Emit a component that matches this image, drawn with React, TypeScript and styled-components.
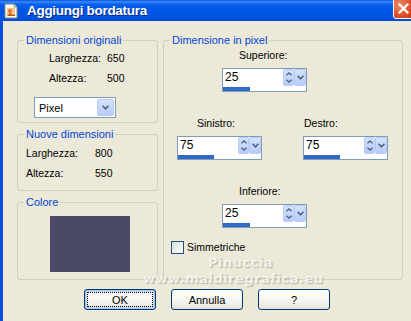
import styled, { createGlobalStyle } from "styled-components";

const GlobalStyle = createGlobalStyle`
  html, body { margin: 0; padding: 0; background: #ECE9D8; }
  body {
    font-family: "Liberation Sans", Arial, sans-serif;
    font-size: 10.5px;
    color: #000;
  }
`;

const Window = styled.div`
  position: relative;
  width: 411px;
  height: 321px;
  overflow: hidden;
  display: flex;
  flex-direction: column;
  background: #ECE9D8;
`;

const TitleBar = styled.div`
  flex: none;
  height: 21px;
  display: flex;
  align-items: center;
  gap: 8px;
  padding-left: 3px;
  overflow: hidden;
  background: linear-gradient(#0750E0 0, #3B8CF7 2px, #0A62EC 4px, #0056E6 9px, #0053E1 17px, #0049D6 21px);
`;

const Title = styled.span`
  flex: 1;
  color: #fff;
  font-weight: bold;
  font-size: 13.5px;
  letter-spacing: -0.3px;
  text-shadow: 1px 1px 0 #0A2A8A;
`;

const CloseBox = styled.div`
  flex: none;
  width: 21px;
  height: 21px;
  margin-top: -5px;
  margin-right: -3px;
  border: 1px solid #fff;
  border-radius: 3px;
  box-sizing: border-box;
  display: flex;
  align-items: center;
  justify-content: center;
  background: radial-gradient(circle at 30% 30%, #F08A6A, #D9441F 70%, #C23A15);
`;

const Body = styled.div`
  flex: 1;
  display: flex;
  flex-direction: column;
  border-left: 3px solid #0B4FE0;
`;

const MainRow = styled.div`
  display: flex;
  gap: 5px;
  padding: 13px 0 0 14px;
`;

const LeftColumn = styled.div`
  width: 141px;
  display: flex;
  flex-direction: column;
  gap: 5px;
`;

const Group = styled.fieldset<{ $pt: number; $pb: number; $pl?: number }>`
  margin: 0;
  min-width: 0;
  border: 1px solid #D0D0BF;
  border-radius: 3px;
  padding: ${(p) => p.$pt}px 0 ${(p) => p.$pb}px ${(p) => p.$pl ?? 0}px;
`;

const RightGroup = styled(Group)`
  width: 240px;
  box-sizing: border-box;
`;

const Legend = styled.legend`
  margin-left: 6px;
  padding: 0 2px;
  line-height: 13px;
  font-size: 11px;
  color: #0046D5;
`;

const InfoGrid = styled.div<{ $labelWidth: number; $indent: number }>`
  display: grid;
  grid-template-columns: ${(p) => p.$labelWidth}px auto;
  row-gap: 6px;
  line-height: 14px;
  padding-left: ${(p) => p.$indent}px;
`;

const ComboBox = styled.div`
  margin: 12px 0 0 16px;
  width: 82px;
  height: 21px;
  box-sizing: border-box;
  border: 1px solid #7F9DB9;
  background: #fff;
  display: flex;
  align-items: center;
  padding: 1px;
`;

const ComboText = styled.span`
  flex: 1;
  padding-left: 3px;
  font-size: 11px;
`;

const ArrowButton = styled.div<{ $w: number }>`
  width: ${(p) => p.$w}px;
  align-self: stretch;
  box-sizing: border-box;
  border: 1px solid #B9CCF5;
  border-radius: 2px;
  background: linear-gradient(#D6E2FE, #B7CBF7);
  display: flex;
  align-items: center;
  justify-content: center;
`;

const Swatch = styled.div`
  margin-left: 32px;
  width: 80px;
  height: 56px;
  background: #4A4A68;
`;

const FieldGrid = styled.div`
  display: grid;
  grid-template-columns: 85px 85px;
  column-gap: 41px;
  row-gap: 24px;
  padding-left: 13px;
`;

const Field = styled.div<{ $span?: boolean }>`
  display: flex;
  flex-direction: column;
  gap: 6px;
  grid-column: ${(p) => (p.$span ? "1 / span 2" : "auto")};
  margin-left: ${(p) => (p.$span ? 45 : 0)}px;
`;

const FieldLabel = styled.span<{ $indent: number }>`
  line-height: 14px;
  padding-left: ${(p) => p.$indent}px;
`;

const SpinBox = styled.div`
  width: 85px;
  height: 24px;
  box-sizing: border-box;
  border: 1px solid #7F9DB9;
  background: #fff;
  display: flex;
  flex-direction: column;
`;

const SpinTop = styled.div`
  height: 17px;
  display: flex;
`;

const SpinValue = styled.span`
  flex: 1;
  padding-left: 2px;
  font-size: 12px;
  line-height: 17px;
`;

const UpDown = styled.div`
  width: 11px;
  box-sizing: border-box;
  border: 1px solid #B9CCF5;
  border-radius: 2px;
  background: linear-gradient(#D6E2FE, #B7CBF7);
  display: flex;
  flex-direction: column;
  align-items: center;
  justify-content: space-around;
`;

const Bar = styled.div<{ $fill: number }>`
  margin-top: 1px;
  width: ${(p) => p.$fill}px;
  height: 4px;
  background: #316AC5;
`;

const CheckRow = styled.div`
  margin-top: 12px;
  padding-left: 7px;
  display: flex;
  align-items: center;
  gap: 3px;
  line-height: 14px;
`;

const CheckBox = styled.span`
  width: 13px;
  height: 13px;
  box-sizing: border-box;
  border: 1px solid #1C5180;
  background: linear-gradient(135deg, #DCDCD7, #fff);
`;

const ButtonRow = styled.div`
  display: flex;
  justify-content: center;
  gap: 15px;
  margin-top: 9px;
`;

const Button = styled.div<{ $default?: boolean }>`
  width: 72px;
  height: 21px;
  box-sizing: border-box;
  border: 1px solid #003C74;
  border-radius: 3px;
  background: linear-gradient(#FFFFFF, #F4F3EE 60%, #E3E0D5);
  display: flex;
  align-items: center;
  justify-content: center;
  font-size: 11px;
  box-shadow: ${(p) =>
    p.$default ? "inset 0 0 0 1px #A9C2F0, inset 0 0 0 2px #C9D8F6" : "none"};
  outline: ${(p) => (p.$default ? "1px dotted #000" : "none")};
  outline-offset: -4px;
`;

const Watermark = styled.div`
  position: absolute;
  left: 0;
  top: 255px;
  width: 411px;
  display: flex;
  flex-direction: column;
  font-family: "DejaVu Sans", sans-serif;
  font-weight: bold;
  font-size: 13px;
  line-height: 16px;
  letter-spacing: 0.5px;
  color: rgba(250, 249, 244, 0.85);
  text-shadow: 1px 1px 1px rgba(120, 116, 104, 0.45);
  pointer-events: none;
`;

const WaterLine = styled.span<{ $left: number }>`
  padding-left: ${(p) => p.$left}px;
`;

const Chevron = () => (
  <svg width={7} height={5} viewBox="0 0 7 5">
    <path d="M0.6 0.8 L3.5 3.8 L6.4 0.8" fill="none" stroke="#4D6185" strokeWidth="1.6" />
  </svg>
);

const ChevronUp = () => (
  <svg width={6} height={4} viewBox="0 0 7 4">
    <path d="M0.5 3.5 L3.5 0.8 L6.5 3.5" fill="none" stroke="#4D6185" strokeWidth="1.5" />
  </svg>
);

const ChevronDown = () => (
  <svg width={6} height={4} viewBox="0 0 7 4">
    <path d="M0.5 0.5 L3.5 3.2 L6.5 0.5" fill="none" stroke="#4D6185" strokeWidth="1.5" />
  </svg>
);

const AppIcon = () => (
  <svg width="16" height="16" viewBox="0 0 16 16">
    <path d="M2 1 H11 L14 4 V15 H2 Z" fill="#FDFDF8" stroke="#8A8A80" strokeWidth="1" />
    <path d="M11 1 V4 H14" fill="#E4E4DA" stroke="#8A8A80" strokeWidth="1" />
    <rect x="4" y="5" width="8" height="8" fill="#F3C792" />
    <circle cx="7" cy="8" r="2" fill="#E0742C" />
    <path d="M4 13 L7 10 L10 12 L12 11 V13 Z" fill="#C2561A" />
  </svg>
);

const CloseIcon = () => (
  <svg width="11" height="11" viewBox="0 0 11 11">
    <path d="M1.5 1.5 L9.5 9.5 M9.5 1.5 L1.5 9.5" stroke="#fff" strokeWidth="2.2" strokeLinecap="square" />
  </svg>
);

type SpinProps = { label: string; indent: number; value: string; fill: number; span?: boolean };

const SpinField = ({ label, indent, value, fill, span }: SpinProps) => (
  <Field $span={span}>
    <FieldLabel $indent={indent}>{label}</FieldLabel>
    <SpinBox>
      <SpinTop>
        <SpinValue>{value}</SpinValue>
        <UpDown>
          <ChevronUp />
          <ChevronDown />
        </UpDown>
        <ArrowButton $w={12}>
          <Chevron />
        </ArrowButton>
      </SpinTop>
      <Bar $fill={fill} />
    </SpinBox>
  </Field>
);

export default function App() {
  return (
    <>
      <GlobalStyle />
      <Window>
        <TitleBar>
          <AppIcon />
          <Title>Aggiungi bordatura</Title>
          <CloseBox>
            <CloseIcon />
          </CloseBox>
        </TitleBar>
        <Body>
          <MainRow>
            <LeftColumn>
              <Group $pt={4} $pb={4}>
                <Legend>Dimensioni originali</Legend>
                <InfoGrid $labelWidth={58} $indent={31}>
                  <span>Larghezza:</span>
                  <span>650</span>
                  <span>Altezza:</span>
                  <span>500</span>
                </InfoGrid>
                <ComboBox>
                  <ComboText>Pixel</ComboText>
                  <ArrowButton $w={17}>
                    <Chevron />
                  </ArrowButton>
                </ComboBox>
              </Group>
              <Group $pt={5} $pb={10}>
                <Legend>Nuove dimensioni</Legend>
                <InfoGrid $labelWidth={69} $indent={8}>
                  <span>Larghezza:</span>
                  <span>800</span>
                  <span>Altezza:</span>
                  <span>550</span>
                </InfoGrid>
              </Group>
              <Group $pt={7} $pb={7}>
                <Legend>Colore</Legend>
                <Swatch />
              </Group>
            </LeftColumn>
            <RightGroup $pt={1} $pb={0}>
              <Legend>Dimensione in pixel</Legend>
              <FieldGrid>
                <SpinField span label="Superiore:" indent={17} value="25" fill={27} />
                <SpinField label="Sinistro:" indent={20} value="75" fill={36} />
                <SpinField label="Destro:" indent={1} value="75" fill={36} />
                <SpinField span label="Inferiore:" indent={17} value="25" fill={27} />
              </FieldGrid>
              <CheckRow>
                <CheckBox />
                <span>Simmetriche</span>
              </CheckRow>
            </RightGroup>
          </MainRow>
          <ButtonRow>
            <Button $default>OK</Button>
            <Button>Annulla</Button>
            <Button>?</Button>
          </ButtonRow>
        </Body>
        <Watermark>
          <WaterLine $left={208}>Pinuccia</WaterLine>
          <WaterLine $left={143}>www.maldiregrafica.eu</WaterLine>
        </Watermark>
      </Window>
    </>
  );
}
